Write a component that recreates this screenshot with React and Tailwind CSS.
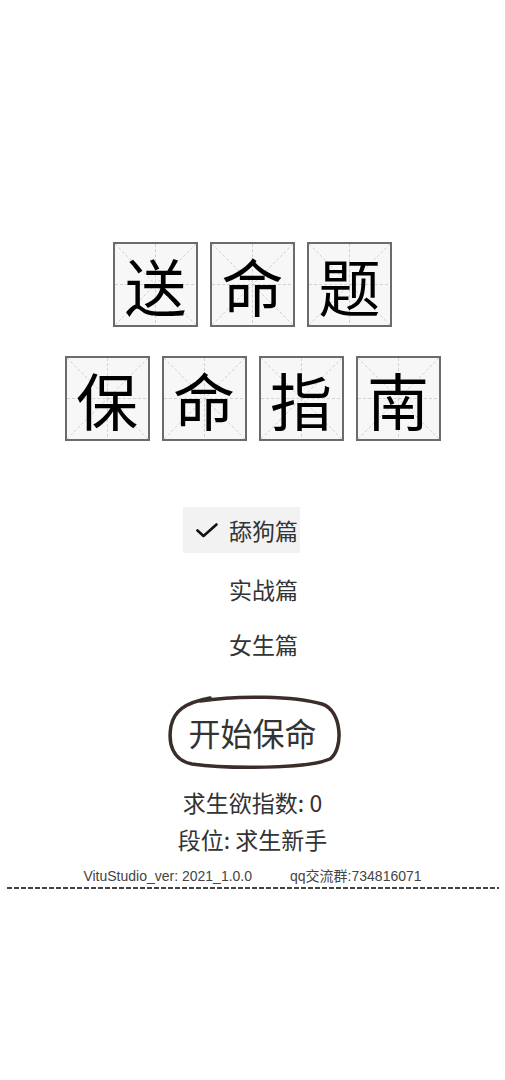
import React from "react";

const cjk = "font-['Noto_Sans_CJK_SC','Noto_Sans',sans-serif]";

function Tile({ ch }) {
  return (
    <div className="relative w-[85px] h-[85px] border-2 border-[#6b6b6b] bg-[#f7f7f7] flex items-center justify-center">
      <svg className="absolute inset-0 w-full h-full" viewBox="0 0 80 80" preserveAspectRatio="none">
        <g stroke="#c8c8c8" strokeWidth="0.8" strokeDasharray="3 2" fill="none">
          <line x1="40" y1="0" x2="40" y2="80" />
          <line x1="0" y1="40" x2="80" y2="40" />
          <line x1="0" y1="0" x2="80" y2="80" />
          <line x1="80" y1="0" x2="0" y2="80" />
        </g>
      </svg>
      <span className={`relative text-[62px] leading-none text-black ${cjk}`}>{ch}</span>
    </div>
  );
}

function MenuItem({ label, checked }) {
  return (
    <div className={`w-[117px] h-[46px] flex items-center ${checked ? "bg-[#f2f2f2]" : ""}`}>
      <div className="w-[46px] flex justify-end pr-[11px]">
        {checked && (
          <svg width="22" height="15" viewBox="0 0 22 15" fill="none">
            <path d="M1.5 7.5 L7.5 13 L20.5 1.5" stroke="#111" strokeWidth="2.6" strokeLinecap="round" strokeLinejoin="round" />
          </svg>
        )}
      </div>
      <span className={`text-[23px] leading-none text-[#333] ${cjk}`}>{label}</span>
    </div>
  );
}

export default function App() {
  return (
    <div className="w-[505px] h-[1080px] bg-white flex flex-col items-center pt-[242px]">
      <div className="flex gap-[12px]">
        {["送", "命", "题"].map((c) => (
          <Tile key={c} ch={c} />
        ))}
      </div>
      <div className="flex gap-[12px] mt-[29px]">
        {["保", "命", "指", "南"].map((c, i) => (
          <Tile key={i} ch={c} />
        ))}
      </div>

      <div className="w-full pl-[183px] mt-[66px] flex flex-col">
        <MenuItem label="舔狗篇" checked />
        <div className="mt-[13px]">
          <MenuItem label="实战篇" />
        </div>
        <div className="mt-[9px]">
          <MenuItem label="女生篇" />
        </div>
      </div>

      <div className="relative mt-[26px] ml-[4px] w-[180px] h-[77px] flex items-center justify-center">
        <svg className="absolute inset-0 w-full h-full" viewBox="0 0 178 77" fill="none">
          <path
            d="M34 8 C 72 2, 128 3, 156 11 C 176 17, 178 56, 164 66 C 140 76, 62 76, 26 71 C 6 67, 2 50, 5 33 C 8 19, 17 10, 44 5"
            stroke="#3b2e2a"
            strokeWidth="3.5"
            strokeLinecap="round"
          />
        </svg>
        <span className={`relative text-[32px] leading-none text-[#333] mr-[4px] ${cjk}`}>开始保命</span>
      </div>

      <div className={`mt-[21px] text-[23px] leading-none text-[#333] ${cjk}`}>求生欲指数: 0</div>
      <div className={`mt-[14px] text-[23px] leading-none text-[#333] ${cjk}`}>段位: 求生新手</div>

      <div className="mt-[18px] flex gap-[38px] text-[14px] leading-none text-[#444] font-['Liberation_Sans','Noto_Sans_CJK_SC',sans-serif]">
        <span>VituStudio_ver: 2021_1.0.0</span>
        <span>qq交流群:734816071</span>
      </div>
      <div className="mt-[4px] w-[492px] h-[2px] bg-[repeating-linear-gradient(90deg,#444_0_5px,transparent_5px_7px)]" />
    </div>
  );
}
